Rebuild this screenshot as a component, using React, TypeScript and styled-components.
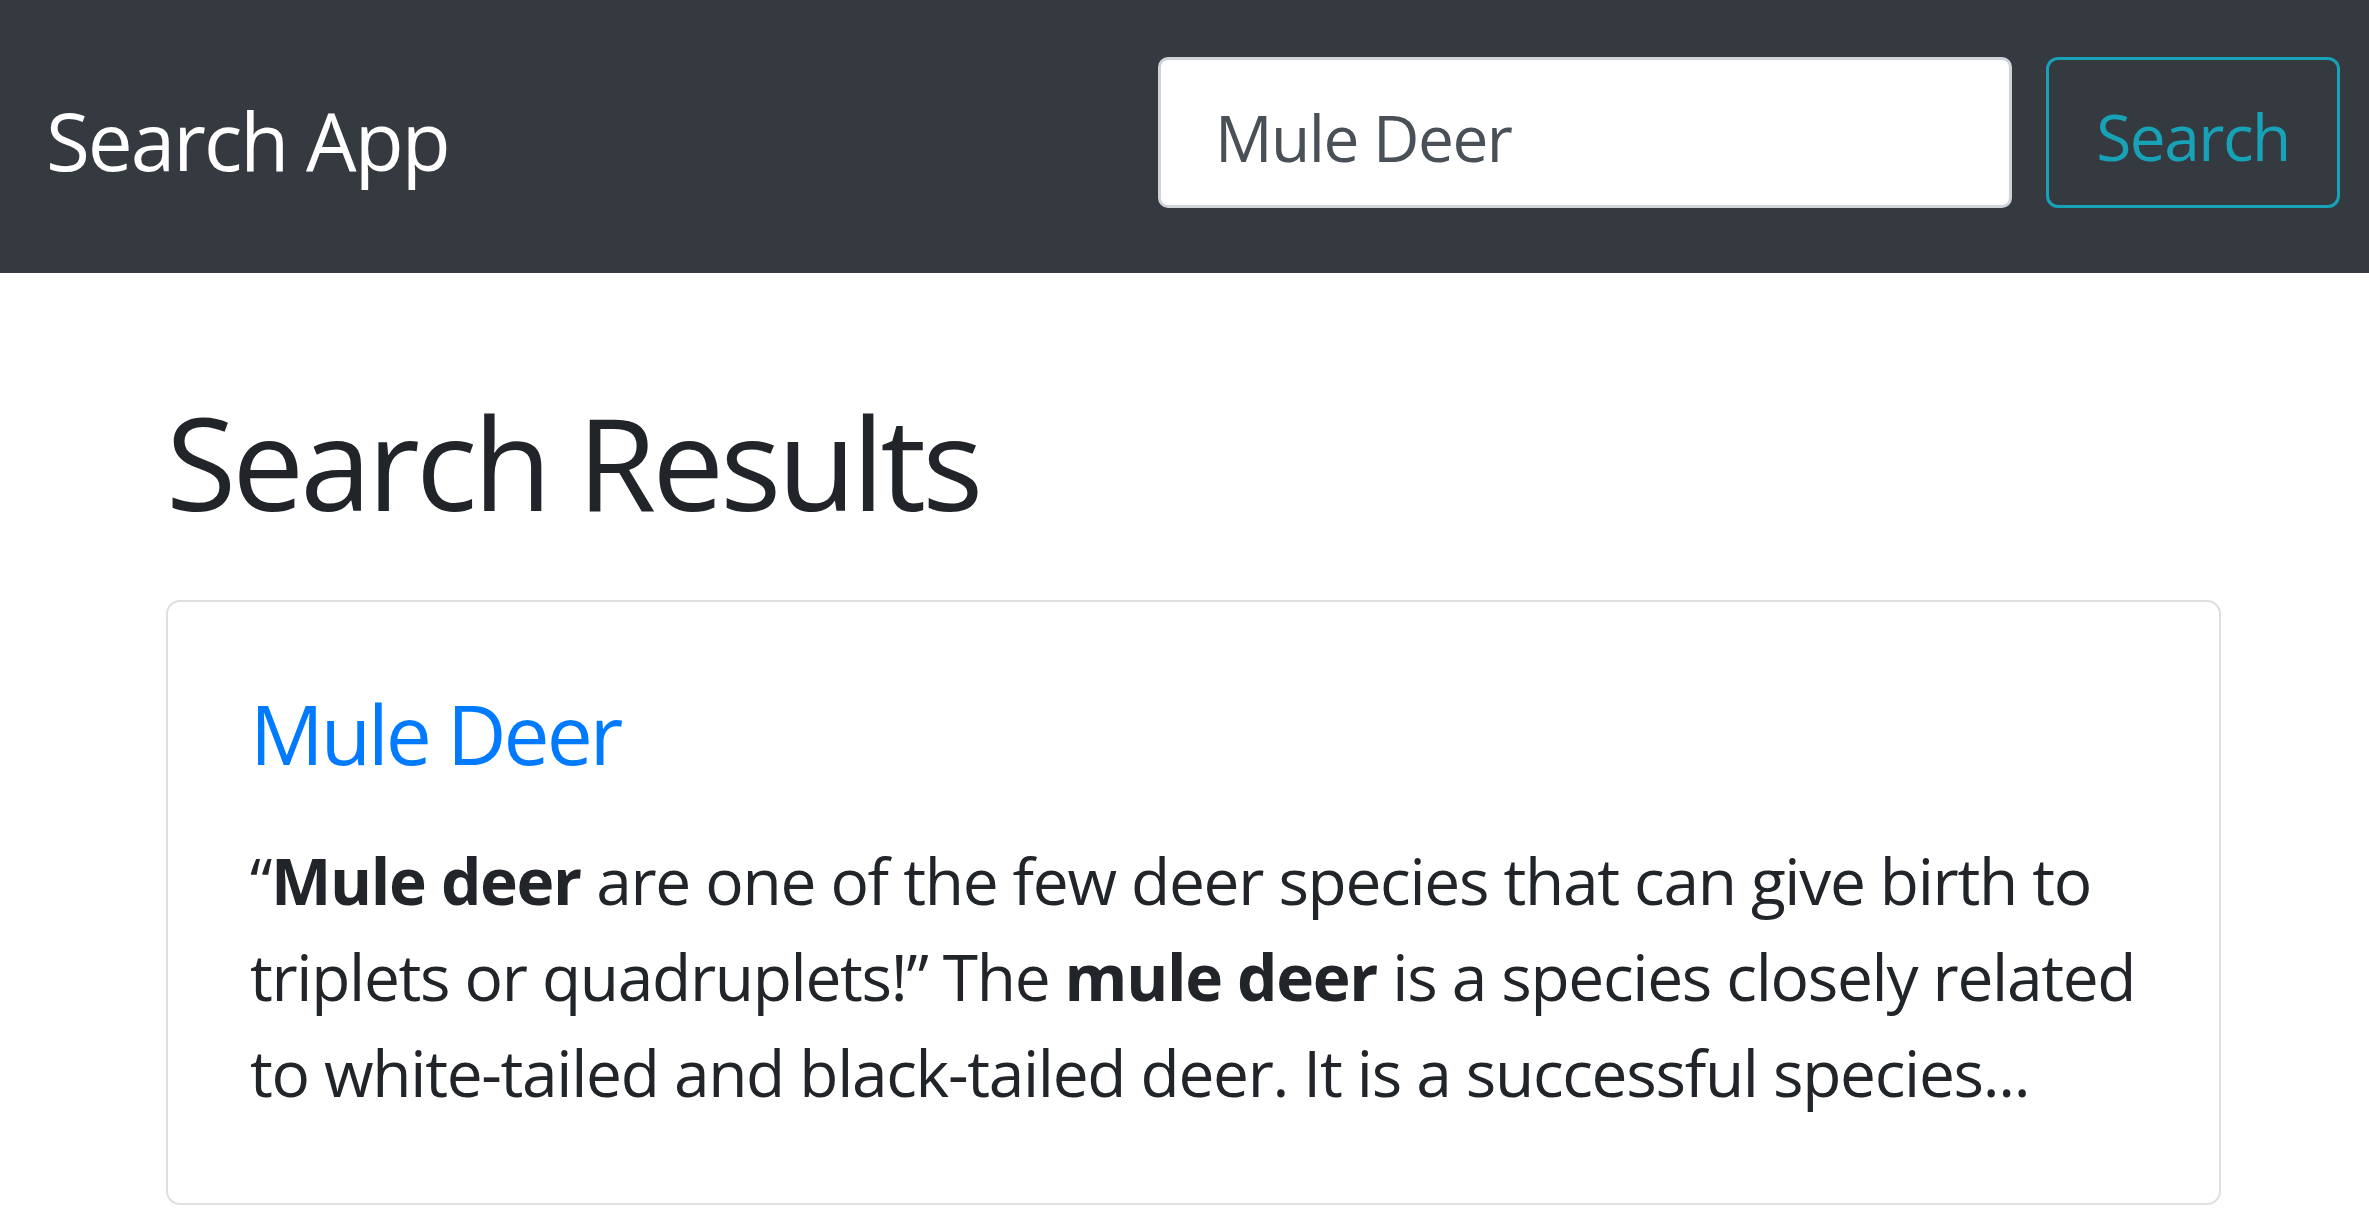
import React from "react";
import styled, { createGlobalStyle } from "styled-components";

const GlobalStyle = createGlobalStyle`
  html, body {
    margin: 0;
    padding: 0;
    background: #ffffff;
  }
  body {
    font-family: "Open Sans", "Noto Sans", "Liberation Sans", sans-serif;
    color: #212529;
  }
  * { box-sizing: border-box; }
`;

const NavBar = styled.nav`
  height: 273px;
  background: #343a40;
  display: flex;
  align-items: center;
  justify-content: space-between;
  padding: 0 29px 0 46px;
`;

const Brand = styled.a`
  font-size: 80px;
  line-height: 1.2;
  color: #ffffff;
  text-decoration: none;
  padding-top: 6px;
  letter-spacing: -2px;
`;

const SearchForm = styled.form`
  display: flex;
  align-items: center;
  gap: 34px;
  margin: 0 0 8px;
`;

const SearchInput = styled.input`
  width: 854px;
  height: 151px;
  padding: 9px 48px 0 54px;
  font-family: inherit;
  font-size: 64px;
  line-height: 1.5;
  color: #495057;
  background: #ffffff;
  border: 3px solid #ced4da;
  border-radius: 10px;
  outline: none;
  letter-spacing: -1.5px;
`;

const OutlineButton = styled.button`
  width: 294px;
  height: 151px;
  padding: 9px 0 0;
  font-family: inherit;
  font-size: 64px;
  line-height: 1.5;
  color: #17a2b8;
  background: transparent;
  border: 3px solid #17a2b8;
  border-radius: 12px;
  cursor: pointer;
  letter-spacing: -1.5px;
`;

const Container = styled.main`
  padding: 112px 0 0 166px;
  width: calc(166px + 2055px);
`;

const PageTitle = styled.h2`
  margin: 0 0 61px;
  font-size: 128px;
  font-weight: 400;
  line-height: 1.2;
  color: #212529;
  letter-spacing: -3.9px;
`;

const Card = styled.article`
  width: 2055px;
  border: 2px solid #dfdfdf;
  border-radius: 14px;
  background: #ffffff;
`;

const CardBody = styled.div`
  padding: 82px;
`;

const CardTitle = styled.h5`
  margin: 0 0 51px;
  font-size: 82px;
  font-weight: 400;
  line-height: 1.2;
  letter-spacing: -3px;
`;

const TitleLink = styled.a`
  color: #007bff;
  text-decoration: none;
`;

const Snippet = styled.p`
  margin: 0;
  font-size: 64px;
  line-height: 96px;
  color: #212529;
  white-space: nowrap;
  letter-spacing: -1.3px;

  b {
    font-weight: 700;
  }
`;

export default function App() {
  return (
    <>
      <GlobalStyle />
      <NavBar>
        <Brand href="#">Search App</Brand>
        <SearchForm onSubmit={(e) => e.preventDefault()}>
          <SearchInput type="search" defaultValue="Mule Deer" aria-label="Search" />
          <OutlineButton type="submit">Search</OutlineButton>
        </SearchForm>
      </NavBar>
      <Container>
        <PageTitle>Search Results</PageTitle>
        <Card>
          <CardBody>
            <CardTitle>
              <TitleLink href="#">Mule Deer</TitleLink>
            </CardTitle>
            <Snippet>
              “<b>Mule deer</b> are one of the few deer species that can give birth to
              <br />
              triplets or quadruplets!” The <b>mule deer</b> is a species closely related
              <br />
              to white-tailed and black-tailed deer. It is a successful species...
            </Snippet>
          </CardBody>
        </Card>
      </Container>
    </>
  );
}
